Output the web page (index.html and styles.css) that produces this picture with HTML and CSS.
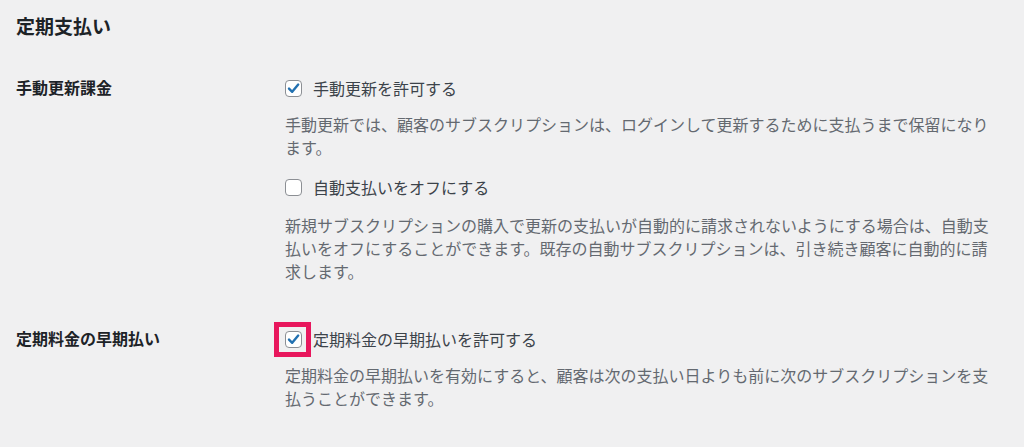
FILE: index.html
```html
<!DOCTYPE html>
<html lang="ja">
<head>
    <meta charset="UTF-8">
    <meta name="viewport" content="width=device-width, initial-scale=1.0">
    <title>定期支払い</title>
    <link rel="stylesheet" href="styles.css">
</head>
<body>
    <h2 class="section-title">定期支払い</h2>

    <div class="form-row">
        <div class="row-label">手動更新課金</div>
        <div class="row-field">
            <label class="option">
                <span class="box checked">
                    <svg viewBox="0 0 17 17" width="17" height="17"><path d="M4 8.6 L7.2 11.8 L13.2 4.6" fill="none" stroke="#2271b1" stroke-width="2.4" stroke-linecap="round" stroke-linejoin="round"/></svg>
                </span>
                手動更新を許可する
            </label>
            <p class="desc">手動更新では、顧客のサブスクリプションは、ログインして更新するために支払うまで保留になります。</p>

            <label class="option option-next">
                <span class="box"></span>
                自動支払いをオフにする
            </label>
            <p class="desc desc-next">新規サブスクリプションの購入で更新の支払いが自動的に請求されないようにする場合は、自動支払いをオフにすることができます。既存の自動サブスクリプションは、引き続き顧客に自動的に請求します。</p>
        </div>
    </div>

    <div class="form-row form-row-second">
        <div class="row-label">定期料金の早期払い</div>
        <div class="row-field">
            <label class="option">
                <span class="box checked marked">
                    <svg viewBox="0 0 17 17" width="17" height="17"><path d="M4 8.6 L7.2 11.8 L13.2 4.6" fill="none" stroke="#2271b1" stroke-width="2.4" stroke-linecap="round" stroke-linejoin="round"/></svg>
                </span>
                定期料金の早期払いを許可する
            </label>
            <p class="desc">定期料金の早期払いを有効にすると、顧客は次の支払い日よりも前に次のサブスクリプションを支払うことができます。</p>
        </div>
    </div>
</body>
</html>
```

FILE: styles.css
```css
/* ページ全体 */
body {
    margin: 0;
    padding: 0 16px;
    background: #f0f0f1;
    color: #3c434a;
    font-family: "Noto Sans CJK JP", "Noto Sans", sans-serif;
    font-size: 16px;
}

/* 見出し */
.section-title {
    margin: 14px 0 0;
    font-size: 19px;
    line-height: 24px;
    font-weight: bold;
    color: #1d2327;
}

/* 設定の行 */
.form-row {
    display: grid;
    grid-template-columns: 269px 706px;
    margin-top: 38px;
}

.form-row-second {
    margin-top: 44px;
}

.row-label {
    font-weight: bold;
    color: #1d2327;
    line-height: 22px;
}

/* チェックボックス */
.option {
    display: flex;
    align-items: center;
    line-height: 24px;
    gap: 11px;
    color: #3c434a;
}

.option-next {
    margin-top: 16px;
}

.box {
    position: relative;
    width: 17px;
    height: 17px;
    box-sizing: border-box;
    border: 1px solid #8c8f94;
    border-radius: 4px;
    background: #fff;
    flex: none;
    display: flex;
    align-items: center;
    justify-content: center;
}

.box svg {
    display: block;
    flex: none;
}

/* 強調の枠 */
.marked::after {
    content: "";
    position: absolute;
    left: -12px;
    right: -10px;
    top: -10px;
    bottom: -10px;
    border: 5px solid #e8175d;
}

/* 説明文 */
.desc {
    margin: 13px 0 0;
    line-height: 23px;
    color: #646970;
}

.desc-next {
    margin-top: 15px;
}
```
